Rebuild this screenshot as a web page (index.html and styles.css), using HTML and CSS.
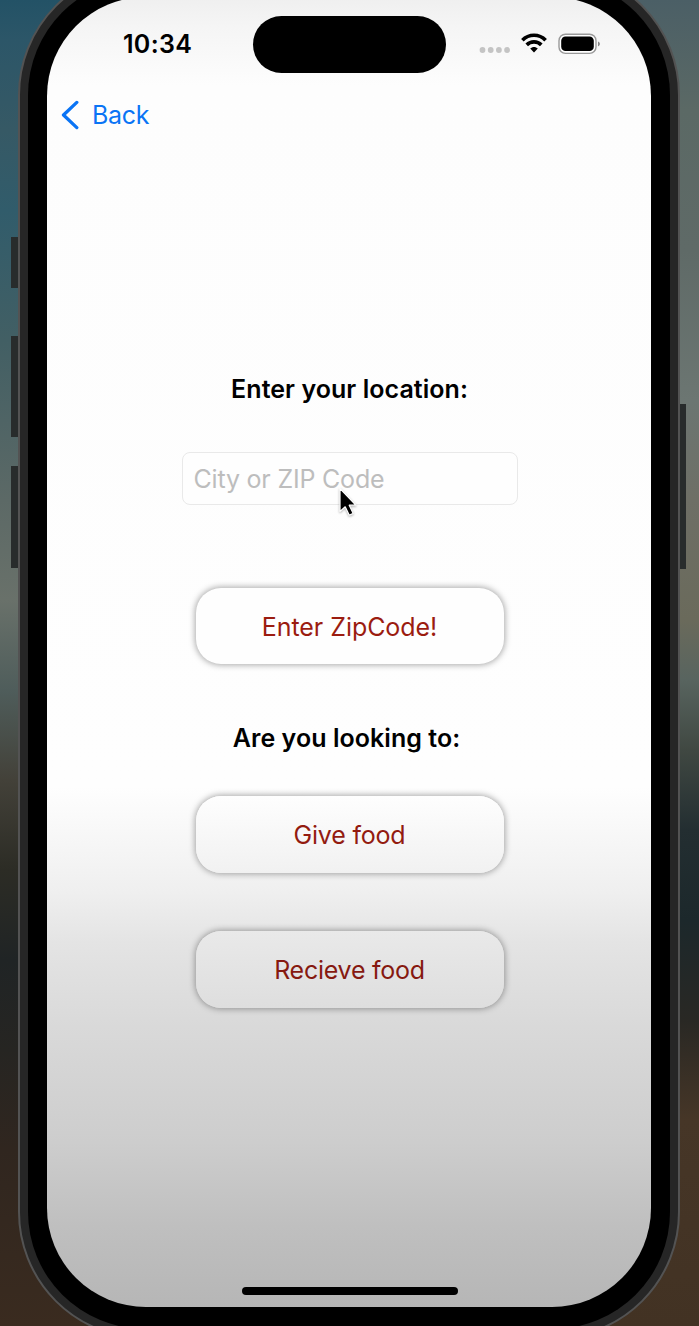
FILE: index.html
```html
<!DOCTYPE html>
<html lang="en">
<head>
<meta charset="utf-8">
<title>Location</title>
<link rel="stylesheet" href="styles.css">
</head>
<body>
<div class="desktop">
  <div class="phone">
    <i class="key key-action"></i><i class="key key-up"></i><i class="key key-down"></i><i class="key key-power"></i>
    <div class="bezel">
      <main class="screen">
        <header class="status">
          <span class="time">10:34</span>
          <span class="island"></span>
          <span class="indicators">
            <svg class="dots" width="32" height="8" viewBox="0 0 32 8"><g fill="#c4c4c4"><circle cx="3.5" cy="4" r="2.9"/><circle cx="11.7" cy="4" r="2.9"/><circle cx="19.9" cy="4" r="2.9"/><circle cx="28.1" cy="4" r="2.9"/></g></svg>
            <svg class="wifi" width="26" height="20" viewBox="0 0 26 20"><g fill="none" stroke="#000" stroke-width="3.7"><path d="M1.4 7.2C7.8 .6 18.2 .6 24.6 7.2"/><path d="M5.7 11.9C9.8 7.9 16.2 7.9 20.3 11.9"/></g><path d="M9.2 15.6C11.4 13.4 14.6 13.4 16.8 15.6L13 19.5Z"/></svg>
            <svg class="battery" width="43" height="22" viewBox="0 0 43 22"><rect x="1" y="1.2" width="37" height="19.2" rx="6.5" fill="#fff" stroke="#999" stroke-width="1.4"/><rect x="3.2" y="3.5" width="32.6" height="14.6" rx="4.3"/><path d="M40 8.4C42.5 9.2 42.5 12.4 40 13.2Z" fill="#888"/></svg>
          </span>
        </header>
        <nav class="nav">
          <a class="back"><svg width="18" height="30" viewBox="0 0 18 30"><path d="M15.8 2.4L2.5 15L15.8 27.6" fill="none" stroke="#0a74f5" stroke-width="3.3" stroke-linecap="round" stroke-linejoin="round"/></svg><span>Back</span></a>
        </nav>
        <section class="form">
          <h2 class="title title-location">Enter your location:</h2>
          <input class="field" type="text" placeholder="City or ZIP Code">
          <button class="button button-zip">Enter ZipCode!</button>
          <h2 class="title title-choice">Are you looking to:</h2>
          <button class="button button-give">Give food</button>
          <button class="button button-receive">Recieve food</button>
        </section>
        <div class="home"></div>
      </main>
    </div>
  </div>
  <svg class="cursor" width="24" height="36" viewBox="0 0 24 36"><path d="M3 2.5V25.5L8.2 20.8L12.3 29.2L16.2 27.4L12.2 19.2H18.8Z" fill="#000" stroke="#fff" stroke-width="1.2" stroke-linejoin="round"/></svg>
</div>
</body>
</html>
```
FILE: styles.css
```css
* { box-sizing: border-box; }
body { margin: 0; font-family: Inter, "Liberation Sans", sans-serif; }
.desktop {
  position: relative;
  width: 699px;
  height: 1326px;
  overflow: hidden;
  padding-left: 18px;
  background:
    linear-gradient(#4b5f66 0, #5b6965 110px, #5f6a67 250px, #6c7672 400px, #6e6f66 500px, #6a6a5b 620px, #58645f 680px, #404842 750px, #232e31 830px, #1c282b 920px, #292824 1020px, #463627 1120px, #423223 1326px) right / 349px 100% no-repeat,
    linear-gradient(#235266 0, #2c5668 40px, #365965 130px, #315c6b 210px, #425f64 340px, #5c6966 500px, #69716a 600px, #4f5d5b 690px, #434139 780px, #2c2c25 870px, #202425 960px, #262522 1050px, #30261f 1150px, #3a2b1f 1326px);
}
.phone {
  position: relative;
  width: 662px;
  height: 1371px;
  margin-top: -32px;
  padding: 8px;
  border: 2px solid #535353;
  border-radius: 127px;
  background: #262626;
}
.bezel {
  height: 100%;
  padding: 19px;
  border-radius: 117px;
  background: #000;
}
.screen {
  display: flex;
  flex-direction: column;
  height: 1310px;
  border-radius: 99px;
  overflow: hidden;
  background: linear-gradient(#efefef 0, #f5f5f5 30px, #fdfdfd 88px, #fefefe 790px, #f7f7f7 840px, #efefef 895px, #e4e4e4 945px, #d9d9d9 1030px, #cdcdcd 1145px, #bfbfbf 1230px, #b6b6b6 1310px);
}
.key { position: absolute; width: 7px; left: -9px; background: #282c2c; }
.key-action { top: 267px; height: 51px; }
.key-up { top: 366px; height: 101px; }
.key-down { top: 496px; height: 102px; }
.key-power { top: 434px; height: 165px; left: 660px; width: 6px; }
.status { display: flex; height: 92px; padding: 19px 50px 0 76px; }
.time { width: 130px; padding-top: 12px; font-size: 25px; line-height: 32px; font-weight: 600; letter-spacing: .3px; }
.island { width: 193px; height: 57px; border-radius: 29px; background: #000; }
.indicators { display: flex; padding: 17px 0 0 33.5px; }
.dots { margin-top: 13px; }
.wifi { margin-left: 10px; }
.battery { margin-left: 11px; }
.nav { height: 56px; padding: 10px 0 0 14px; }
.back { display: flex; align-items: center; gap: 13px; height: 32px; color: #0a74f5; font-size: 25px; letter-spacing: -.3px; }
.form { display: flex; flex-direction: column; align-items: center; padding: 228px 0 0 1px; }
.title { margin: 0; font-size: 25px; line-height: 32px; font-weight: 600; letter-spacing: .05px; white-space: nowrap; }
.field {
  width: 336px;
  height: 53px;
  margin-top: 47px;
  padding: 1px 11px 0;
  border: 1px solid #e9e9e9;
  border-radius: 8px;
  background: #fefefe;
  font: 25px Inter, "Liberation Sans", sans-serif;
  letter-spacing: -.2px;
}
.field::placeholder { color: #bdbdbd; opacity: 1; }
.button {
  width: 308px;
  height: 76px;
  padding: 0;
  border: 0;
  border-radius: 25px;
  color: #9b1c10;
  font: 25px Inter, "Liberation Sans", sans-serif;
  letter-spacing: -.2px;
  box-shadow: 0 0 6px 1px rgba(0, 0, 0, .34);
}
.button-zip { margin-top: 83px; padding-top: 1px; background: #fefefe; letter-spacing: -.05px; }
.title-choice { margin: 58px 0 0 -6px; }
.button-give { margin-top: 42px; height: 77px; background: linear-gradient(#fefefe, #f1f1f1); color: #931b10; }
.button-receive { margin-top: 58px; height: 77px; padding-top: 1px; background: linear-gradient(#e9e9e9, #dedede); color: #861910; letter-spacing: -.25px; }
.home { width: 216px; height: 8px; margin: auto auto 12px 195px; border-radius: 4px; background: #000; }
.cursor { position: absolute; left: 337px; top: 486px; filter: drop-shadow(0 1px 1px rgba(0, 0, 0, .3)); }
```
